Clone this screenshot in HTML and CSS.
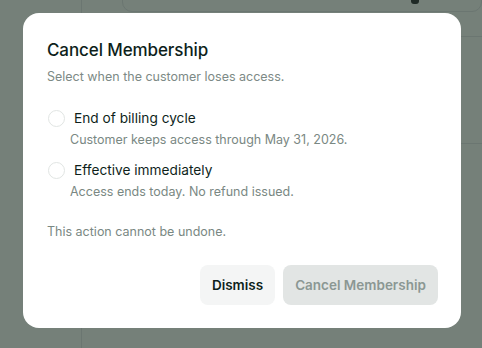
FILE: index.html
```html
<!DOCTYPE html>
<html>
<head>
<meta charset="utf-8">
<link rel="stylesheet" href="styles.css">
</head>
<body>
<div class="app">
  <aside class="sidebar"></aside>
  <main class="main">
    <div class="topcard"><span class="glyph"></span></div>
    <div class="rowline r1"></div>
    <div class="rowline r2"></div>
  </main>
</div>
<div class="overlay">
  <div class="modal">
    <h2 class="title">Cancel Membership</h2>
    <p class="subtitle">Select when the customer loses access.</p>
    <div class="options">
      <label class="option">
        <span class="opt-head"><span class="radio"></span><span class="opt-label">End of billing cycle</span></span>
        <span class="opt-desc">Customer keeps access through May 31, 2026.</span>
      </label>
      <label class="option">
        <span class="opt-head"><span class="radio"></span><span class="opt-label">Effective immediately</span></span>
        <span class="opt-desc">Access ends today. No refund issued.</span>
      </label>
    </div>
    <p class="note">This action cannot be undone.</p>
    <div class="actions">
      <button class="btn btn-dismiss">Dismiss</button>
      <button class="btn btn-cancel" disabled>Cancel Membership</button>
    </div>
  </div>
</div>
</body>
</html>
```
FILE: styles.css
```css
* { box-sizing: border-box; }
html, body { margin: 0; padding: 0; }
body {
  width: 482px;
  height: 348px;
  overflow: hidden;
  background: #758079;
  font-family: Inter, "Noto Sans", sans-serif;
  position: relative;
}
.app {
  display: flex;
  height: 348px;
}
.sidebar {
  width: 82px;
  border-right: 1px solid #6b7671;
  flex-shrink: 0;
}
.main {
  flex: 1;
  position: relative;
}
.topcard {
  margin: -10px 0 0 40px;
  height: 22px;
  border: 1px solid #6b7671;
  border-radius: 10px;
  position: relative;
}
.glyph {
  position: absolute;
  left: 288px;
  top: 9px;
  width: 8px;
  height: 4px;
  background: #1f2a26;
  border-radius: 0 0 3px 3px;
}
.rowline {
  position: absolute;
  right: 0;
  width: 40px;
  height: 1px;
  background: #6b7671;
}
.r1 { top: 36px; }
.r2 { top: 143px; }

.overlay {
  position: absolute;
  inset: 0;
  display: flex;
  align-items: flex-start;
  justify-content: flex-start;
  padding: 13px 0 0 23px;
}
.modal {
  width: 438px;
  height: 315px;
  background: #ffffff;
  border-radius: 16px;
  padding: 26px 23px 23px 24px;
  display: flex;
  flex-direction: column;
}
.title {
  margin: 0;
  font-size: 17px;
  line-height: 22px;
  font-weight: 500;
  color: #0e1f1b;
  letter-spacing: -0.1px;
}
.subtitle {
  margin: 6px 0 0;
  font-size: 12.5px;
  line-height: 19px;
  color: #7d8a86;
}
.options {
  margin-top: 22px;
  display: flex;
  flex-direction: column;
  gap: 10px;
}
.option {
  display: flex;
  flex-direction: column;
  gap: 2px;
}
.opt-head {
  display: flex;
  align-items: center;
  gap: 9px;
  height: 20px;
}
.radio {
  width: 17px;
  height: 17px;
  border-radius: 50%;
  border: 1px solid #e1e5e3;
  background: #fff;
  flex-shrink: 0;
  margin-left: 1px;
}
.opt-label {
  font-size: 13.7px;
  line-height: 20px;
  color: #0e1f1b;
}
.opt-desc {
  margin-left: 23px;
  font-size: 12.5px;
  line-height: 20px;
  color: #7a8883;
}
.note {
  margin: 20px 0 0;
  font-size: 12.5px;
  line-height: 20px;
  color: #7a8883;
}
.actions {
  margin-top: auto;
  display: flex;
  justify-content: flex-end;
  gap: 8px;
}
.btn {
  height: 40px;
  border: none;
  border-radius: 8px;
  font-family: inherit;
  font-size: 13.5px;
  font-weight: 600;
  padding: 0;
  white-space: nowrap;
  text-align: center;
}
.btn-dismiss {
  width: 75px;
  background: #f4f5f5;
  color: #0e1f1b;
}
.btn-cancel {
  width: 155px;
  background: #e2e5e4;
  color: #8b9793;
}
```
